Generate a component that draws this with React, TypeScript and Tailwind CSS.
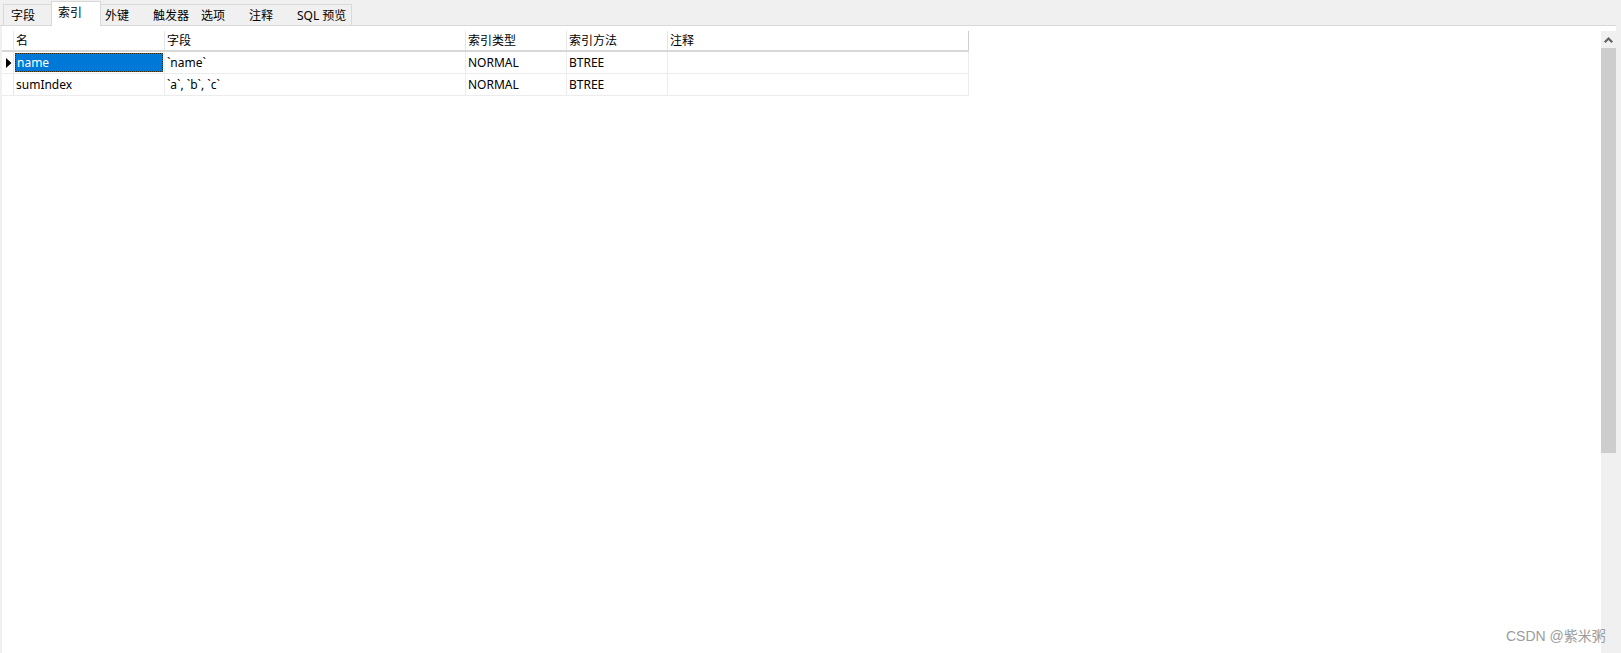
import React from 'react';

const tabs = [
  { label: '字段', w: 'w-[48px]', pl: 'pl-[7px]' },
  { label: '索引', w: 'w-[50px]', pl: 'pl-[6px]', active: true },
  { label: '外键', w: 'w-[44px]', pl: 'pl-[5px]' },
  { label: '触发器', w: 'w-[50px]', pl: 'pl-[9px]' },
  { label: '选项', w: 'w-[48px]', pl: 'pl-[7px]' },
  { label: '注释', w: 'w-[48px]', pl: 'pl-[7px]' },
  { label: 'SQL 预览', w: 'w-[62px]', pl: 'pl-[7px]' },
];

const cols = [
  { label: '名', w: 'w-[151px]' },
  { label: '字段', w: 'w-[301px]' },
  { label: '索引类型', w: 'w-[101px]' },
  { label: '索引方法', w: 'w-[101px]' },
  { label: '注释', w: 'w-[301px]' },
];

const rows = [
  ['name', '`name`', 'NORMAL', 'BTREE', ''],
  ['sumIndex', '`a`, `b`, `c`', 'NORMAL', 'BTREE', ''],
];

const font = "font-['Segoe_UI','Noto_Sans','Noto_Sans_CJK_SC',sans-serif]";

export default function App() {
  return (
    <div className={`relative flex h-[653px] w-[1621px] overflow-hidden bg-[#f0f0f0] text-[12px] text-black ${font}`}>
      <div className="flex w-[1616px] flex-col">
        {/* tab strip */}
        <div className="relative flex h-[26px] shrink-0 items-end border-b border-[#d9d9d9] pl-[3px]">
          {tabs.map((t, i) => (
            <div
              key={t.label}
              className={
                t.active
                  ? `relative z-10 -mb-px flex h-[25px] ${t.w} ${t.pl} items-start border-x border-t border-[#d9d9d9] bg-white pt-[3px] leading-[16px]`
                  : `flex h-[21px] ${t.w} ${t.pl} items-start border-t border-[#d9d9d9] pt-[3px] leading-[16px] ${i === 0 ? 'border-l' : ''} ${i === tabs.length - 1 ? 'border-r' : ''} ${i === 2 ? '-ml-px' : ''}`
              }
            >
              {t.label}
            </div>
          ))}
        </div>

        {/* body */}
        <div className="flex min-h-0 flex-1">
          <div className="w-[2px] shrink-0 bg-[#f0f0f0]" />
          <div className="flex flex-1 bg-white">
            <div className="flex-1 pt-[5px]">
              {/* header */}
              <div className="flex h-[21px] w-[967px] border-b-2 border-[#d8d8d8]">
                <div className="w-[12px] border-r border-[#e6e6e6]" />
                {cols.map((c, i) => (
                  <div
                    key={i}
                    className={`${c.w} flex items-center border-r ${i === cols.length - 1 ? 'border-[#cfcfcf]' : 'border-[#e6e6e6]'} pl-[2px] pt-px leading-[16px]`}
                  >
                    {c.label}
                  </div>
                ))}
              </div>
              {rows.map((r, ri) => (
                <div key={ri} className="flex h-[22px] w-[967px] border-b border-[#ececec]">
                  <div className="flex w-[12px] items-center border-r border-[#e6e6e6] pl-[4px]">
                    {ri === 0 && (
                      <svg width="6" height="10" viewBox="0 0 6 10">
                        <polygon points="0,0 5.5,5 0,10" fill="#000" />
                      </svg>
                    )}
                  </div>
                  {r.map((cell, ci) => (
                    <div key={ci} className={`${cols[ci].w} flex border-r border-[#ececec]`}>
                      {ri === 0 && ci === 0 ? (
                        <div className="m-[1px] flex flex-1 items-center border border-dotted border-[#3a2a10] bg-[#0078d7] pl-px pt-px leading-[16px] text-white">
                          {cell}
                        </div>
                      ) : (
                        <div className="flex flex-1 items-center pl-[2px] pt-px leading-[16px]">{cell}</div>
                      )}
                    </div>
                  ))}
                </div>
              ))}
            </div>
            {/* scrollbar */}
            <div className="mt-[5px] flex w-[15px] shrink-0 flex-col bg-[#f0f0f0]">
              <div className="flex h-[17px] items-center justify-center">
                <svg width="9" height="6" viewBox="0 0 9 6">
                  <polygon points="4.5,0 9,4.5 7.5,6 4.5,3 1.5,6 0,4.5" fill="#606060" />
                </svg>
              </div>
              <div className="h-[405px] bg-[#cdcdcd]" />
            </div>
          </div>
        </div>
      </div>
      <div className="w-[5px] bg-[#f0f0f0]" />

      <div className="absolute bottom-[8px] left-[1506px] text-[14px] leading-[18px] text-[#9c9c9c] font-['Liberation_Sans','Noto_Sans_CJK_SC',sans-serif]">
        CSDN @紫米粥
      </div>
    </div>
  );
}
